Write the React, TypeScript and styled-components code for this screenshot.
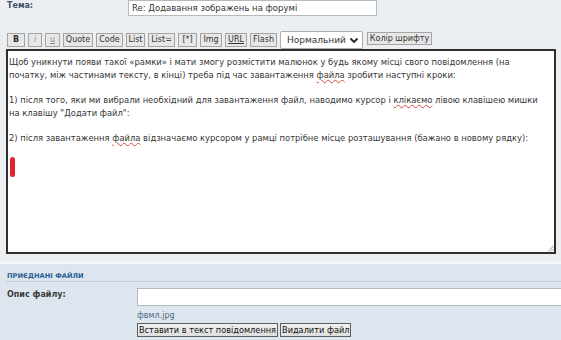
import React from "react";
import styled, { createGlobalStyle } from "styled-components";

const Global = createGlobalStyle`
  html, body { margin: 0; padding: 0; }
  body {
    background: #ebeff2;
    font-family: "DejaVu Sans", Verdana, sans-serif;
    width: 561px;
    height: 340px;
    overflow: hidden;
  }
`;

const Page = styled.div`
  display: flex;
  flex-direction: column;
  width: 561px;
`;

const Top = styled.div`
  display: flex;
  flex-direction: column;
  padding: 0 0 0 6px;
`;

const SubjectRow = styled.div`
  display: grid;
  grid-template-columns: 122px 249px;
  align-items: start;
  height: 16px;
`;

const FieldLabel = styled.label`
  padding: 1px 0 0 1px;
  font-size: 8px;
  line-height: 10px;
  font-weight: 700;
  color: #425067;
`;

const TextInput = styled.div`
  box-sizing: border-box;
  height: 16px;
  background: #fff;
  border: 1px solid #b4bac0;
  padding: 0 3px;
  font-size: 8.5px;
  line-height: 14px;
  color: #333;
  white-space: nowrap;
  overflow: hidden;
`;

const Toolbar = styled.div`
  display: flex;
  align-items: center;
  gap: 3px;
  height: 18px;
  margin-top: 15px;
  padding-left: 1px;
`;

const ToolButton = styled.button<{
  $w: number;
  $bold?: boolean;
  $italic?: boolean;
  $under?: boolean;
  $muted?: boolean;
}>`
  box-sizing: border-box;
  display: inline-flex;
  align-items: center;
  justify-content: center;
  width: ${(p) => p.$w}px;
  height: 14px;
  margin: 0;
  padding: 0;
  border: 1px solid #a4a4a4;
  background: #e7e7e7;
  color: ${(p) => (p.$muted ? "#8c8c8c" : "#333")};
  font-family: "DejaVu Sans", Verdana, sans-serif;
  font-size: 8px;
  line-height: 12px;
  font-weight: ${(p) => (p.$bold ? 700 : 400)};
  font-style: ${(p) => (p.$italic ? "italic" : "normal")};
  text-decoration: ${(p) => (p.$under ? "underline" : "none")};
  white-space: nowrap;
`;

const SelectBox = styled.div`
  position: relative;
  box-sizing: border-box;
  display: flex;
  align-items: center;
  width: 83px;
  height: 18px;
  padding-left: 6px;
  background: #fff;
  border: 1px solid #a9afb5;
  border-radius: 2px;
  font-size: 9px;
  color: #333;
  white-space: nowrap;
`;

const Chevron = styled.svg`
  position: absolute;
  right: 3px;
  top: 5px;
`;

const SmallButton = styled(ToolButton)`
  height: 13px;
  align-self: flex-start;
  margin-top: 1px;
  margin-left: 1px;
`;

const Editor = styled.div`
  position: relative;
  box-sizing: border-box;
  width: 550px;
  height: 205px;
  background: #fff;
  border: 2px solid #2e2e2e;
  padding: 5px 2px 0 1px;
  font-size: 8.4px;
  line-height: 13px;
  color: #353535;
  overflow: hidden;
`;

const Para = styled.p`
  margin: 0 0 12px;
  white-space: nowrap;
`;

const Spell = styled.span`
  text-decoration: underline wavy #d9453f;
  text-decoration-thickness: 1px;
  text-underline-offset: 1px;
`;

const Marker = styled.div`
  width: 5px;
  height: 20px;
  margin: 8px 0 0 1px;
  border-radius: 3px;
  background: #e0232e;
`;

const Grip = styled.svg`
  position: absolute;
  right: 0;
  bottom: 0;
`;

const Band = styled.div`
  height: 8px;
`;

const AttachPanel = styled.section`
  display: flex;
  flex-direction: column;
  height: 76px;
  border-top: 2px solid #f4f6f8;
  background: #dde6ee;
  padding-left: 6px;
`;

const PanelTitle = styled.h3`
  margin: 0;
  padding: 7px 0 0 1px;
  height: 10px;
  border-bottom: 1px solid #c3ccd4;
  font-size: 6.7px;
  line-height: 10px;
  font-weight: 700;
  color: #2a5c92;
  text-transform: uppercase;
`;

const AttachRow = styled.div`
  display: grid;
  grid-template-columns: 131px 1fr;
  margin-top: 6px;
`;

const RowLabel = styled.label`
  padding-left: 1px;
  font-size: 8px;
  line-height: 14px;
  font-weight: 700;
  color: #3a3a3a;
`;

const FileColumn = styled.div`
  display: flex;
  flex-direction: column;
`;

const DescInput = styled.div`
  box-sizing: border-box;
  width: 440px;
  height: 18px;
  background: #fff;
  border: 1px solid #b4bac0;
`;

const FileName = styled.div`
  margin-top: 5px;
  font-size: 8px;
  line-height: 10px;
  color: #546b82;
`;

const Actions = styled.div`
  display: flex;
  gap: 2px;
  margin-top: 2px;
`;

const FormButton = styled.button`
  box-sizing: border-box;
  height: 14px;
  margin: 0;
  padding: 0 1px;
  border: 1px solid #5f5f5f;
  background: linear-gradient(#f0f0f0, #dedede);
  font-family: "DejaVu Sans", Verdana, sans-serif;
  font-size: 8.2px;
  line-height: 12px;
  color: #111;
  white-space: nowrap;
`;

export default function App() {
  return (
    <Page>
      <Global />
      <Top>
        <SubjectRow>
          <FieldLabel>Тема:</FieldLabel>
          <TextInput>Re: Додавання зображень на форумі</TextInput>
        </SubjectRow>
        <Toolbar>
          <ToolButton $w={18} $bold>B</ToolButton>
          <ToolButton $w={14} $italic $muted>i</ToolButton>
          <ToolButton $w={15} $under $muted>u</ToolButton>
          <ToolButton $w={30}>Quote</ToolButton>
          <ToolButton $w={27}>Code</ToolButton>
          <ToolButton $w={19}>List</ToolButton>
          <ToolButton $w={27}>List=</ToolButton>
          <ToolButton $w={19}>[*]</ToolButton>
          <ToolButton $w={22}>Img</ToolButton>
          <ToolButton $w={22} $under>URL</ToolButton>
          <ToolButton $w={27}>Flash</ToolButton>
          <SelectBox>
            Нормальний
            <Chevron width="10" height="7" viewBox="0 0 10 7">
              <path d="M1.5 1.5 L5 5 L8.5 1.5" fill="none" stroke="#222" strokeWidth="1.8" />
            </Chevron>
          </SelectBox>
          <SmallButton $w={65}>Колір шрифту</SmallButton>
        </Toolbar>
        <Editor role="textbox">
          <Para>
            Щоб уникнути появи такої «рамки» і мати змогу розмістити малюнок у будь якому місці свого повідомлення (на
            <br />
            початку, між частинами тексту, в кінці) треба під час завантаження <Spell>файла</Spell> зробити наступні кроки:
          </Para>
          <Para>
            1) після того, яки ми вибрали необхідний для завантаження файл, наводимо курсор і <Spell>клікаємо</Spell> лівою клавішею мишки
            <br />
            на клавішу "Додати файл":
          </Para>
          <Para>
            2) після завантаження <Spell>файла</Spell> відзначаємо курсором у рамці потрібне місце розташування (бажано в новому рядку):
          </Para>
          <Marker />
          <Grip width="7" height="7" viewBox="0 0 7 7">
            <path d="M6.5 1 L1 6.5 M6.5 4 L4 6.5" stroke="#8a8a8a" strokeWidth="0.9" />
          </Grip>
        </Editor>
      </Top>
      <Band />
      <AttachPanel>
        <PanelTitle>Приєднані файли</PanelTitle>
        <AttachRow>
          <RowLabel>Опис файлу:</RowLabel>
          <FileColumn>
            <DescInput />
            <FileName>фвмл.jpg</FileName>
            <Actions>
              <FormButton>Вставити в текст повідомлення</FormButton>
              <FormButton>Видалити файл</FormButton>
            </Actions>
          </FileColumn>
        </AttachRow>
      </AttachPanel>
    </Page>
  );
}
